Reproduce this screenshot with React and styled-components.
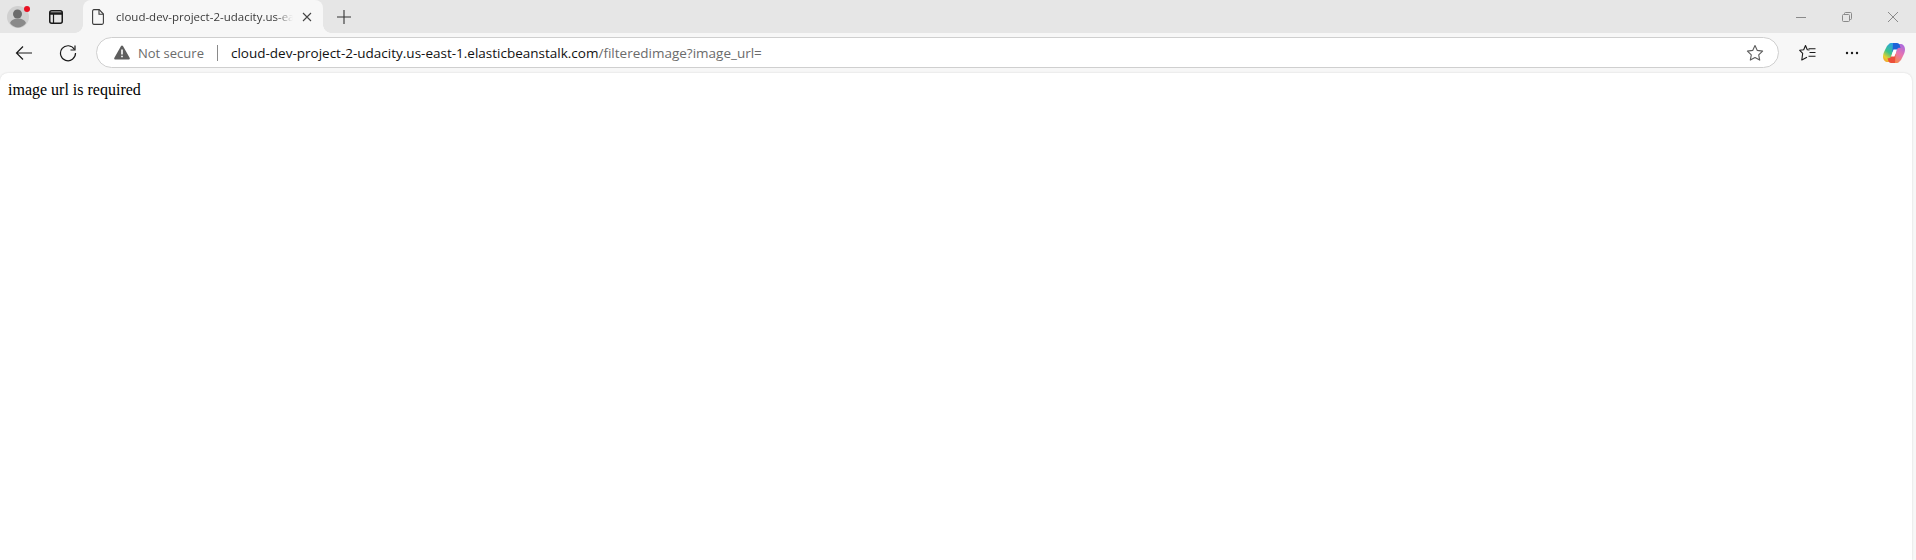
import React from 'react'
import styled, { createGlobalStyle } from 'styled-components'

const GlobalStyle = createGlobalStyle`
  html, body {
    margin: 0;
    padding: 0;
    height: 100%;
    background: #f7f7f7;
    overflow: hidden;
  }
  #root { height: 100%; }
`

const copilotBlade = 'M6 1C6.500.3 7.500 0 8.500 0H13L9.500 10L7 19H5C2 19 0 17 0 13.500C0 11 1 9 2 7L4 3z'
const copilotFold = 'M10 0h4c1.500 0 2.500 1 3 3l.5 2c-1.500-.5-3 0-3.500 1.500l-1 2.500h-3.500z'

function App() {
  return (
    <Window>
      <GlobalStyle />
      <TitleBar>
        <Profile>
          <svg width="22" height="22" viewBox="0 0 22 22">
            <circle cx="11" cy="11" r="11" fill="#d0d0d0" />
            <circle cx="10.500" cy="8" r="4.500" fill="#6b6b6b" />
            <path d="M3 17c1-3 4-4.500 8-4.500s7 1.500 8 4.500c-2 2.800-5 4.500-8 4.500s-6-1.700-8-4.500z" fill="#8a8a8a" />
          </svg>
          <RedDot />
        </Profile>
        <TabsButton>
          <svg width="16" height="16" viewBox="0 0 16 16" fill="none" stroke="#1a1a1a">
            <rect x="1.750" y="1.750" width="12.500" height="12.500" rx="2" strokeWidth="1.500" />
            <path d="M2 4.500h12" strokeWidth="2.500" />
            <path d="M5.500 5v9" strokeWidth="1.200" />
          </svg>
        </TabsButton>
        <Tab>
          <svg width="12" height="16" viewBox="0 0 12 16" fill="none" stroke="#3c3c3c" strokeWidth="1.100">
            <path d="M1.800.6h5.400l4.200 4.400v8.800a1.600 1.600 0 0 1-1.600 1.600h-8a1.600 1.600 0 0 1-1.200-1.600v-11.600a1.600 1.600 0 0 1 1.200-1.600z" />
            <path d="M7 .6v4.600h4.400" />
          </svg>
          <TabTitle>cloud-dev-project-2-udacity.us-east-1.elasticbeanstalk.com</TabTitle>
          <TabClose>
            <svg width="12" height="12" viewBox="0 0 12 12" stroke="#444" strokeWidth="1.100">
              <path d="M2 2l8 8M10 2l-8 8" />
            </svg>
          </TabClose>
        </Tab>
        <NewTab>
          <svg width="16" height="16" viewBox="0 0 16 16" stroke="#333" strokeWidth="1.100">
            <path d="M8 1v14M1 8h14" />
          </svg>
        </NewTab>
        <WindowControls>
          <WindowButton>
            <svg width="10" height="10" viewBox="0 0 10 10" stroke="#8a8a8a"><path d="M0 5.500h10" /></svg>
          </WindowButton>
          <WindowButton>
            <svg width="10" height="10" viewBox="0 0 10 10" fill="none" stroke="#8a8a8a">
              <rect x=".5" y="2.500" width="7" height="7" rx="1" />
              <path d="M2.500 2.500v-1a1 1 0 0 1 1-1h5a1 1 0 0 1 1 1v5a1 1 0 0 1-1 1h-1" />
            </svg>
          </WindowButton>
          <WindowButton>
            <svg width="10" height="10" viewBox="0 0 10 10" stroke="#8a8a8a"><path d="M0 0l10 10M10 0l-10 10" /></svg>
          </WindowButton>
        </WindowControls>
      </TitleBar>
      <Toolbar>
        <NavButton>
          <svg width="18" height="16" viewBox="0 0 18 16" fill="none" stroke="#1a1a1a" strokeWidth="1.200">
            <path d="M17 8H1.500M8 1.500L1.500 8 8 14.500" />
          </svg>
        </NavButton>
        <NavButton>
          <svg width="18" height="18" viewBox="0 0 18 18" fill="none" stroke="#1a1a1a" strokeWidth="1.200">
            <path d="M15.500 5.500A7.500 7.500 0 1 0 16.500 9" />
            <path d="M16 1.500v4.500h-4.500" />
          </svg>
        </NavButton>
        <AddressBar>
          <svg width="16" height="15" viewBox="0 0 16 15">
            <path d="M8 .5c.5 0 .8.200 1.100.700l6.500 11.500c.5.900 0 1.800-1 1.800h-13.200c-1 0-1.500-.9-1-1.800l6.500-11.500c.3-.5.6-.7 1.100-.7z" fill="#5e5e5e" />
            <path d="M7.200 4.500h1.600v5h-1.600zM7.200 10.700h1.600v1.600h-1.600z" fill="#fff" />
          </svg>
          <NotSecure>Not secure</NotSecure>
          <Divider />
          <Url>
            cloud-dev-project-2-udacity.us-east-1.elasticbeanstalk.com
            <UrlPath>/filteredimage?image_url=</UrlPath>
          </Url>
          <StarButton>
            <svg width="18" height="18" viewBox="0 0 18 18" fill="none" stroke="#5c5c5c" strokeWidth="1.100" strokeLinejoin="round">
              <path d="M9 1.500l2.300 4.900 5.300.7-3.900 3.700 1 5.300L9 13.500l-4.700 2.600 1-5.300-3.900-3.700 5.300-.7z" />
            </svg>
          </StarButton>
        </AddressBar>
        <Actions>
          <ActionButton>
            <svg width="18" height="18" viewBox="0 0 18 18" fill="none" stroke="#1a1a1a" strokeWidth="1.100" strokeLinejoin="round">
              <path d="M10.500 6L8.300 5.700 6.500 1.500 4.700 5.700 .7 6.300l3 3-.9 6.700L8 13.200" />
              <path d="M9.500 4.800h7M10.500 8.500h6M9.500 12.200h7" />
            </svg>
          </ActionButton>
          <ActionButton>
            <svg width="14" height="4" viewBox="0 0 14 4" fill="#1a1a1a">
              <circle cx="2" cy="2" r="1.200" />
              <circle cx="7" cy="2" r="1.200" />
              <circle cx="12" cy="2" r="1.200" />
            </svg>
          </ActionButton>
          <CopilotButton>
            <svg width="22" height="20" viewBox="0 0 22 20">
              <defs>
                <linearGradient id="copilotA" x1="0.7" y1="0" x2="0.2" y2="1">
                  <stop offset="0" stopColor="#2a9fe8" />
                  <stop offset="0.500" stopColor="#3cc48a" />
                  <stop offset="0.800" stopColor="#e8d030" />
                  <stop offset="1" stopColor="#f0a030" />
                </linearGradient>
                <linearGradient id="copilotB" x1="0.7" y1="0" x2="0.2" y2="1">
                  <stop offset="0" stopColor="#f58a4a" />
                  <stop offset="0.500" stopColor="#e874b0" />
                  <stop offset="1" stopColor="#a868e0" />
                </linearGradient>
              </defs>
              <path d={copilotBlade} fill="url(#copilotA)" />
              <path d={copilotBlade} fill="url(#copilotB)" transform="rotate(180 11 10)" />
              <path d={copilotFold} fill="#1c62d8" />
              <path d={copilotFold} fill="#ec4f3a" transform="rotate(180 11 10)" />
              <path d="M10.500 6.500h3.500l-2.500 7h-3.500z" fill="#fff" />
            </svg>
          </CopilotButton>
        </Actions>
      </Toolbar>
      <Page>image url is required</Page>
    </Window>
  )
}

const Window = styled.div`
  display: flex;
  flex-direction: column;
  width: 1916px;
  height: 560px;
  background: #f7f7f7;
  overflow: hidden;
`
const TitleBar = styled.div`
  display: flex;
  align-items: flex-end;
  flex: none;
  height: 33px;
  background: #e6e6e6;
`
const Profile = styled.div`
  position: relative;
  display: flex;
  align-self: center;
  width: 22px;
  height: 22px;
  margin-left: 7px;
`
const RedDot = styled.span`
  position: absolute;
  top: 0;
  right: -1px;
  width: 6px;
  height: 6px;
  border-radius: 50%;
  background: #e81123;
`
const TabsButton = styled.div`
  display: flex;
  align-self: center;
  width: 16px;
  height: 16px;
  margin-left: 19px;
`
const Tab = styled.div`
  position: relative;
  display: flex;
  align-items: center;
  width: 240px;
  height: 33px;
  margin-left: 19px;
  padding: 0 8px 0 9px;
  box-sizing: border-box;
  background: #f7f7f7;
  border-radius: 8px 8px 0 0;

  &::before,
  &::after {
    content: '';
    position: absolute;
    bottom: 0;
    width: 8px;
    height: 8px;
  }
  &::before {
    left: -8px;
    background: radial-gradient(circle at 0 0, transparent 7.500px, #f7f7f7 8px);
  }
  &::after {
    right: -8px;
    background: radial-gradient(circle at 100% 0, transparent 7.500px, #f7f7f7 8px);
  }
`
const TabTitle = styled.span`
  flex: 1;
  min-width: 0;
  margin-left: 12px;
  overflow: hidden;
  white-space: nowrap;
  font-family: "Open Sans", "Noto Sans", sans-serif;
  font-size: 11.500px;
  color: #3a3a3a;
  -webkit-mask-image: linear-gradient(to right, #000 90%, transparent);
  mask-image: linear-gradient(to right, #000 90%, transparent);
`
const TabClose = styled.div`
  display: flex;
  align-items: center;
  justify-content: center;
  width: 16px;
  height: 16px;
  margin-left: 6px;
`
const NewTab = styled.div`
  display: flex;
  align-self: center;
  width: 16px;
  height: 16px;
  margin-left: 13px;
`
const WindowControls = styled.div`
  display: flex;
  align-items: center;
  align-self: center;
  margin-left: auto;
  margin-right: 18px;
  gap: 36px;
`
const WindowButton = styled.div`
  display: flex;
  width: 10px;
  height: 10px;
`
const Toolbar = styled.div`
  display: flex;
  align-items: center;
  flex: none;
  height: 40px;
  padding-bottom: 1px;
  box-sizing: border-box;
  background: #f7f7f7;
`
const NavButton = styled.div`
  display: flex;
  align-items: center;
  justify-content: center;
  flex: none;
  width: 18px;
  height: 18px;
  margin-left: 15px;
  & + & {
    margin-left: 26px;
  }
`
const AddressBar = styled.div`
  display: flex;
  align-items: center;
  flex: 1;
  height: 31px;
  margin-left: 19px;
  padding: 0 14px 0 17px;
  box-sizing: border-box;
  background: #fff;
  border: 1px solid #cfcfcf;
  border-radius: 16px;
`
const NotSecure = styled.span`
  margin-left: 8px;
  font-family: "Open Sans", "Noto Sans", sans-serif;
  font-size: 13px;
  color: #6b6b6b;
`
const Divider = styled.span`
  width: 1px;
  height: 16px;
  margin-left: 13px;
  background: #8a8a8a;
`
const Url = styled.span`
  flex: 1;
  margin-left: 13px;
  white-space: nowrap;
  font-family: "Open Sans", "Noto Sans", sans-serif;
  font-size: 13.500px;
  color: #111;
`
const UrlPath = styled.span`
  color: #6b6b6b;
`
const StarButton = styled.div`
  display: flex;
  width: 18px;
  height: 18px;
`
const Actions = styled.div`
  display: flex;
  align-items: center;
  flex: none;
  margin-left: 17px;
  margin-right: 10px;
  gap: 20px;
`
const ActionButton = styled.div`
  display: flex;
  align-items: center;
  justify-content: center;
  width: 24px;
  height: 18px;
`
const CopilotButton = styled.div`
  display: flex;
  align-items: center;
  justify-content: center;
  width: 24px;
  height: 24px;
  margin-left: -2px;
`
const Page = styled.main`
  flex: 1;
  margin-right: 4px;
  padding: 8px;
  background: #fff;
  border-radius: 8px 8px 0 0;
  box-shadow: 0 0 2px rgba(0, 0, 0, 0.15);
  font-family: "Liberation Serif", "Times New Roman", serif;
  font-size: 16px;
  color: #000;
`

export default App
